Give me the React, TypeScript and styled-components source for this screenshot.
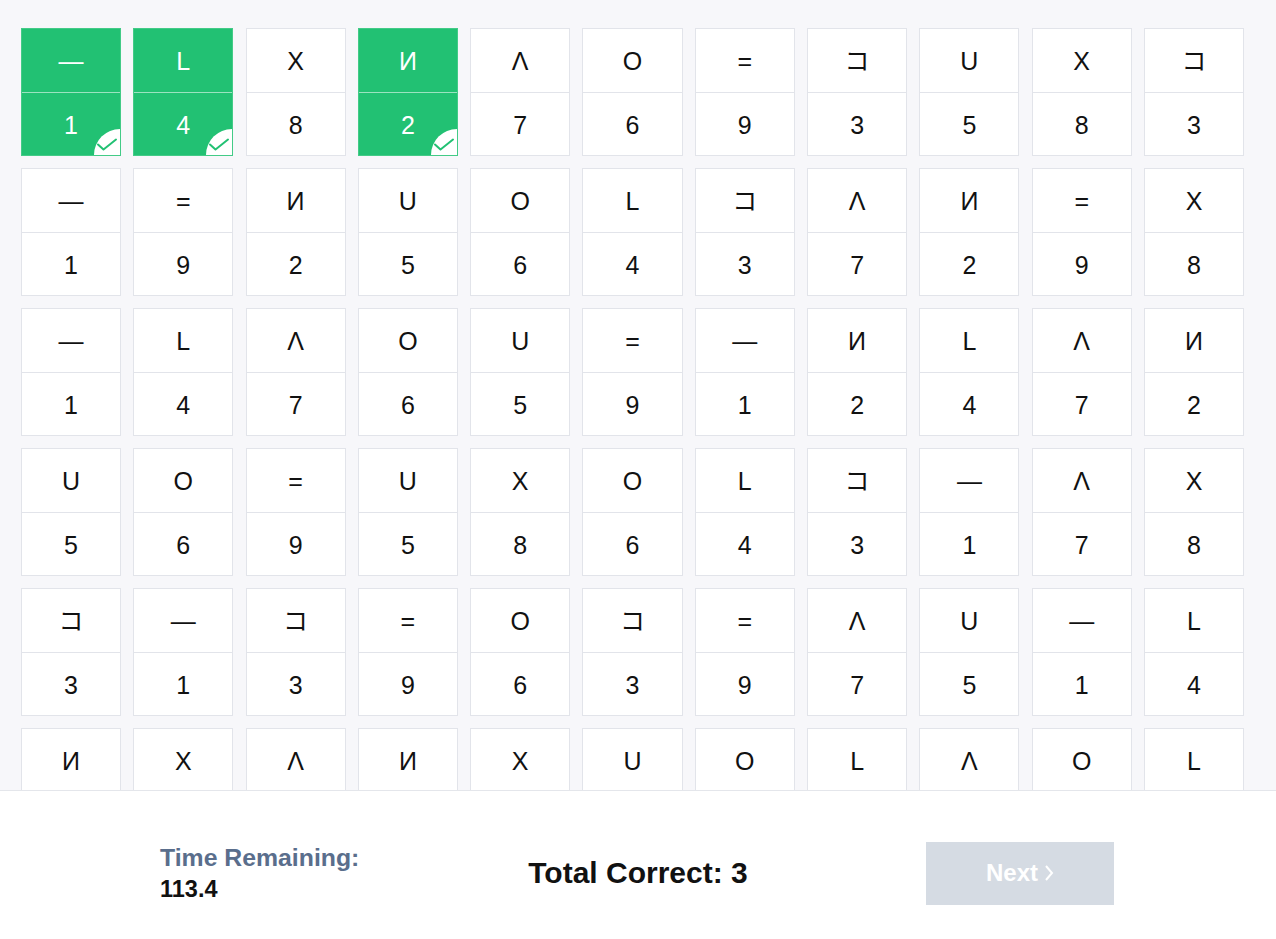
import styled, { createGlobalStyle } from 'styled-components';

const GlobalStyle = createGlobalStyle`
  html, body {
    margin: 0;
    padding: 0;
    background: #f7f7fa;
    font-family: "Liberation Sans", Arial, "Noto Sans CJK JP", sans-serif;
  }
  * { box-sizing: border-box; }
`;

const Page = styled.div`
  display: flex;
  flex-direction: column;
  height: 939px;
  overflow: hidden;
`;

const Board = styled.div`
  height: 790px;
  overflow: hidden;
  padding: 28px 32px 0 21px;
  background: #f7f7fa;
`;

const Grid = styled.div`
  display: grid;
  grid-template-columns: repeat(11, 1fr);
  column-gap: 12.3px;
  row-gap: 12px;
`;

const Card = styled.div<{ $correct?: boolean }>`
  position: relative;
  display: flex;
  flex-direction: column;
  height: 128px;
  overflow: hidden;
  background: ${(p) => (p.$correct ? '#22c173' : '#ffffff')};
  border: 1px solid ${(p) => (p.$correct ? '#43cb87' : '#e2e4ea')};
  color: ${(p) => (p.$correct ? '#ffffff' : '#111111')};
`;

const Half = styled.div<{ $correct?: boolean; $top?: boolean }>`
  flex: 1;
  display: flex;
  align-items: center;
  justify-content: center;
  padding-top: 3px;
  font-size: 25px;
  line-height: 1;
  border-bottom: ${(p) =>
    p.$top ? `1px solid ${p.$correct ? 'rgba(255,255,255,0.55)' : '#e2e4ea'}` : 'none'};
`;

const Badge = styled.div`
  position: absolute;
  right: -26px;
  bottom: -26px;
  width: 52px;
  height: 52px;
  border-radius: 50%;
  background: #ffffff;

  svg {
    position: absolute;
    left: 0;
    top: 0;
  }
`;

const Footer = styled.div`
  flex: 1;
  background: #ffffff;
  border-top: 1px solid #e4e6eb;
  padding: 16px 160px 0 160px;
  display: grid;
  grid-template-columns: 1fr auto 1fr;
  align-items: center;
`;

const Timer = styled.div`
  display: flex;
  flex-direction: column;
  gap: 4px;
  font-weight: 700;
`;

const TimerLabel = styled.div`
  font-size: 24.8px;
  color: #5a6e8c;
`;

const TimerValue = styled.div`
  font-size: 23.5px;
  color: #111111;
`;

const Score = styled.div`
  font-size: 30px;
  font-weight: 700;
  color: #111111;
`;

const NextButton = styled.button`
  justify-self: end;
  width: 188px;
  height: 63px;
  margin-right: 2px;
  border: none;
  background: #d5dbe3;
  color: #ffffff;
  font-family: inherit;
  font-size: 24px;
  font-weight: 700;
  display: flex;
  align-items: center;
  justify-content: center;
  gap: 6px;
`;

const key: Record<string, number> = {
  '—': 1, 'И': 2, 'コ': 3, 'L': 4, 'U': 5, 'O': 6, 'Λ': 7, 'X': 8, '=': 9,
};

const rows: string[][] = [
  ['—', 'L', 'X', 'И', 'Λ', 'O', '=', 'コ', 'U', 'X', 'コ'],
  ['—', '=', 'И', 'U', 'O', 'L', 'コ', 'Λ', 'И', '=', 'X'],
  ['—', 'L', 'Λ', 'O', 'U', '=', '—', 'И', 'L', 'Λ', 'И'],
  ['U', 'O', '=', 'U', 'X', 'O', 'L', 'コ', '—', 'Λ', 'X'],
  ['コ', '—', 'コ', '=', 'O', 'コ', '=', 'Λ', 'U', '—', 'L'],
  ['И', 'X', 'Λ', 'И', 'X', 'U', 'O', 'L', 'Λ', 'O', 'L'],
];

const correct = new Set(['0-0', '0-1', '0-3']);

export default function App() {
  return (
    <Page>
      <GlobalStyle />
      <Board>
        <Grid>
          {rows.map((row, r) =>
            row.map((sym, c) => {
              const ok = correct.has(`${r}-${c}`);
              return (
                <Card key={`${r}-${c}`} $correct={ok}>
                  <Half $top $correct={ok}>{sym}</Half>
                  <Half $correct={ok}>{key[sym]}</Half>
                  {ok && (
                    <Badge>
                      <svg width="26" height="26" viewBox="0 0 26 26">
                        <polyline
                          points="4,15.5 9.5,20.5 22,10.5"
                          fill="none"
                          stroke="#22c173"
                          strokeWidth="2"
                          strokeLinecap="round"
                          strokeLinejoin="round"
                        />
                      </svg>
                    </Badge>
                  )}
                </Card>
              );
            })
          )}
        </Grid>
      </Board>
      <Footer>
        <Timer>
          <TimerLabel>Time Remaining:</TimerLabel>
          <TimerValue>113.4</TimerValue>
        </Timer>
        <Score>Total Correct: 3</Score>
        <NextButton>
          Next
          <svg width="10" height="18" viewBox="0 0 10 18">
            <polyline points="2,2 8,9 2,16" fill="none" stroke="#ffffff" strokeWidth="2" />
          </svg>
        </NextButton>
      </Footer>
    </Page>
  );
}
